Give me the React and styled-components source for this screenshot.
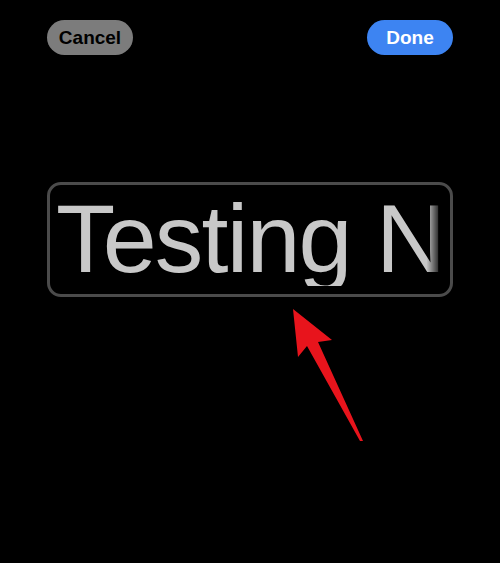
import React from "react";
import styled, { createGlobalStyle } from "styled-components";

const GlobalStyle = createGlobalStyle`
  html, body {
    margin: 0;
    padding: 0;
    background: #000;
  }
  body {
    font-family: "Liberation Sans", Arial, sans-serif;
  }
`;

function App() {
  return (
    <>
      <GlobalStyle />
      <Screen>
        <TopBar>
          <PillButton type="button" variant="cancel">
            Cancel
          </PillButton>
          <PillButton type="button" variant="done">
            Done
          </PillButton>
        </TopBar>
        <NameBox>
          <NameClip>
            <NameText>Testing N</NameText>
          </NameClip>
        </NameBox>
        <ArrowWrap>
          <svg width="80" height="140" viewBox="0 0 80 140">
            <polygon
              points="3,8 42,39 28,41 73,140 70,140 17,45 8,56"
              fill="#e8141c"
            />
          </svg>
        </ArrowWrap>
      </Screen>
    </>
  );
}

export default App;

const Screen = styled.div`
  width: 500px;
  height: 563px;
  background: #000;
  overflow: hidden;
  display: flex;
  flex-direction: column;
`;

const TopBar = styled.div`
  display: flex;
  justify-content: space-between;
  padding: 20px 47px 0;
`;

const PillButton = styled.button`
  width: 86px;
  height: 35px;
  border: none;
  border-radius: 18px;
  padding: 0;
  font-family: "Liberation Sans", Arial, sans-serif;
  font-weight: bold;
  font-size: 19px;
  background: ${(p) => (p.variant === "done" ? "#3d84f2" : "#7c7c7c")};
  color: ${(p) => (p.variant === "done" ? "#fff" : "#000")};
`;

const NameBox = styled.div`
  margin: 127px 47px 0;
  height: 105px;
  border: 3px solid #4b4b4b;
  border-radius: 14px;
  padding: 4px 8px 0 6px;
`;

const NameClip = styled.div`
  height: 97px;
  overflow: hidden;
  white-space: nowrap;
  -webkit-mask-image: linear-gradient(to right, #000 0, #000 96%, transparent 100%);
  mask-image: linear-gradient(to right, #000 0, #000 96%, transparent 100%);
`;

const NameText = styled.div`
  font-family: "Liberation Sans", Arial, sans-serif;
  font-size: 97px;
  line-height: 100px;
  letter-spacing: -1.8px;
  color: #c8c8c8;
`;

const ArrowWrap = styled.div`
  display: flex;
  padding: 4px 0 0 290px;
`;
